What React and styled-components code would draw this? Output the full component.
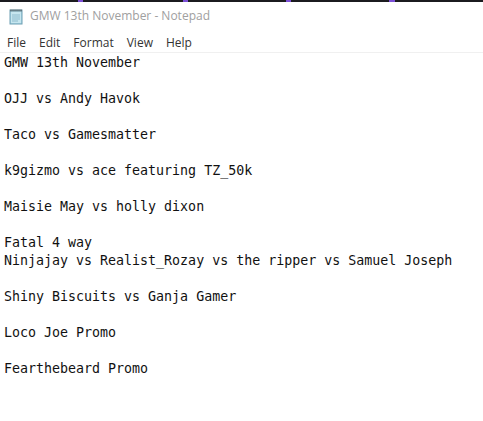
import React from 'react';
import styled, { createGlobalStyle } from 'styled-components';

const GlobalStyle = createGlobalStyle`
  html, body { margin: 0; padding: 0; background: #fff; }
  body { width: 483px; height: 421px; overflow: hidden; }
`;

const Window = styled.div`
  width: 483px;
  height: 421px;
  display: flex;
  flex-direction: column;
  background: #fff;
  overflow: hidden;
`;

const Taskbar = styled.div`
  height: 2px;
  background: #1b1b1f;
  display: flex;
`;

const Tick = styled.span`
  width: ${p => p.w}px;
  margin-left: ${p => p.at}px;
  background: ${p => p.c};
`;

const TitleBar = styled.div`
  height: 28px;
  display: flex;
  align-items: center;
  padding-left: 8px;
  gap: 6px;
`;

const Title = styled.span`
  font-family: "Open Sans", "Noto Sans", sans-serif;
  font-size: 12px;
  color: #a0a0a0;
  margin-top: -1px;
`;

const MenuBar = styled.div`
  height: 20px;
  padding-top: 2px;
  display: flex;
  align-items: center;
  padding-left: 7px;
  border-bottom: 1px solid #f0f0f0;
`;

const MenuItem = styled.span`
  font-family: "Open Sans", "Noto Sans", sans-serif;
  font-size: 12px;
  color: #333;
  margin-right: ${p => p.gap}px;
`;

const Editor = styled.pre`
  margin: 0;
  padding: 1px 0 0 4px;
  font-family: "DejaVu Sans Mono", "Liberation Mono", monospace;
  font-size: 13.3px;
  line-height: 18px;
  color: #111;
  flex: 1;
`;

const NotepadIcon = () => (
  <svg width="16" height="17" viewBox="0 0 16 17">
    <rect x="2" y="2" width="12" height="14" fill="#a9d7e6" stroke="#6f9fb3" />
    <rect x="3" y="4" width="10" height="11" fill="#c6e6ef" />
    <path d="M4 7h8M4 9h8M4 11h8M4 13h6" stroke="#8fbccd" strokeWidth="1" />
    <path d="M3 1.5v2M5 1.5v2M7 1.5v2M9 1.5v2M11 1.5v2M13 1.5v2" stroke="#444" strokeWidth="1" />
  </svg>
);

const text = `GMW 13th November

OJJ vs Andy Havok

Taco vs Gamesmatter

k9gizmo vs ace featuring TZ_50k

Maisie May vs holly dixon

Fatal 4 way
Ninjajay vs Realist_Rozay vs the ripper vs Samuel Joseph

Shiny Biscuits vs Ganja Gamer

Loco Joe Promo

Fearthebeard Promo`;

export default function App() {
  return (
    <>
      <GlobalStyle />
      <Window>
        <Taskbar>
          <Tick at={78} w={5} c="#7b4fd6" />
          <Tick at={100} w={5} c="#7b4fd6" />
          <Tick at={98} w={5} c="#7b4fd6" />
          <Tick at={98} w={6} c="#7b4fd6" />
        </Taskbar>
        <TitleBar>
          <NotepadIcon />
          <Title>GMW 13th November - Notepad</Title>
        </TitleBar>
        <MenuBar>
          <MenuItem gap={13}>File</MenuItem>
          <MenuItem gap={13}>Edit</MenuItem>
          <MenuItem gap={13}>Format</MenuItem>
          <MenuItem gap={13}>View</MenuItem>
          <MenuItem gap={0}>Help</MenuItem>
        </MenuBar>
        <Editor>{text}</Editor>
      </Window>
    </>
  );
}
